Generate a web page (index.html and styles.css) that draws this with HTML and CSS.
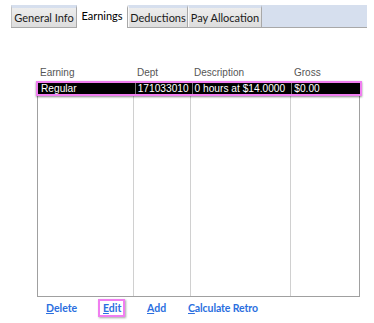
FILE: index.html
```html
<!DOCTYPE html>
<html>
<head>
<meta charset="utf-8">
<link rel="stylesheet" href="styles.css">
</head>
<body>
<div class="page">
  <div class="tabs">
    <div class="tab">General Info</div>
    <div class="tab active">Earnings</div>
    <div class="tab">Deductions</div>
    <div class="tab">Pay Allocation</div>
    <div class="filler"></div>
  </div>
  <div class="grid">
    <div class="head">
      <div class="c c1">Earning</div>
      <div class="c c2">Dept</div>
      <div class="c c3">Description</div>
      <div class="c c4">Gross</div>
    </div>
    <div class="body">
      <div class="sel">
        <div class="c c1">Regular</div>
        <div class="c c2">171033010</div>
        <div class="c c3">0 hours at $14.0000</div>
        <div class="c c4">$0.00</div>
      </div>
      <div class="cols">
        <div class="col c1"></div>
        <div class="col c2"></div>
        <div class="col c3"></div>
        <div class="col c4"></div>
      </div>
    </div>
  </div>
  <div class="links">
    <a class="lnk l-del"><u>D</u>elete</a>
    <a class="lnk l-edit"><u>E</u>dit</a>
    <a class="lnk l-add"><u>A</u>dd</a>
    <a class="lnk l-calc"><u>C</u>alculate Retro</a>
  </div>
</div>
</body>
</html>
```

FILE: styles.css
```css
html, body { margin: 0; padding: 0; background: #fff; }
.page { width: 374px; height: 323px; overflow: hidden; position: relative; font-family: "Lato", "Open Sans", sans-serif; }

.tabs { display: flex; margin: 5px 0 0 11px; width: 356px; height: 23px; border-bottom: 1px solid #a8a8a8; box-sizing: border-box; }
.tab { font-size: 11px; color: #1a1a1a; line-height: 19px; box-sizing: border-box; white-space: nowrap; text-align: center;
  border-top: 3px solid #d6dfee; background: linear-gradient(#ededed, #dddddd);
  border-right: 1px solid #a8a8a8; border-left: 1px solid #fafafa; }
.tab:first-child { border-left: 1px solid #c0c0c0; }
.tab:nth-child(1) { width: 66px; }
.tab.active { width: 51px; background: #fff; border-top: 3px solid #fff; border-right: 1px solid #a8a8a8; border-left: none; line-height: 16px; margin-bottom: -1px; color: #000; }
.tab:nth-child(3) { width: 60px; }
.tab:nth-child(4) { width: 74px; }
.filler { flex: 1; background: #d6dfee; }

.grid { margin: 37px 0 0 38px; width: 322px; font-family: "Liberation Sans", Arial, sans-serif; font-size: 10px; }
.head { display: flex; height: 16px; line-height: 16px; color: #555; }
.c { box-sizing: border-box; padding-left: 2px; white-space: nowrap; }
.c1 { width: 97px; }
.c2 { width: 57px; }
.c3 { width: 100px; }
.c4 { width: 68px; }
.body { position: relative; height: 215px; border-left: 1px solid #a0a0a0; border-right: 1px solid #a0a0a0; border-bottom: 1px solid #a0a0a0; margin-left: -1px; }
.sel { position: relative; z-index: 1; display: flex; margin: 0 -3px 0 -2px; height: 15px; line-height: 12px; background: #000; color: #fff;
  border: 2px solid #f07ef0; box-shadow: 0 1px 2px rgba(0,0,0,0.45); box-sizing: border-box; padding-left: 1px; font-size: 10.2px; }
.sel .c { border-right: 1px solid #777; }
.sel .c:last-child { border-right: none; }
.cols { display: flex; height: 200px; }
.col { border-right: 1px solid #d0d0d0; box-sizing: border-box; }
.col.c1 { width: 96px; }
.col.c4 { border-right: none; }

.links { display: flex; align-items: center; margin: 2px 0 0 0; font-size: 10.5px; font-weight: bold; }
.lnk { color: #2b6fe0; line-height: 13px; white-space: nowrap; }
.lnk u { text-decoration: underline; }
.l-del { margin-left: 46px; width: 52px; }
.l-edit { width: 27px; height: 18px; box-sizing: border-box; padding: 1px 0 0 3px; border: 2px solid #f07ef0; box-shadow: 1px 1px 2px rgba(0,0,0,0.35); }
.l-add { margin-left: 22px; width: 41px; }
.l-calc { letter-spacing: -0.1px; }
```
